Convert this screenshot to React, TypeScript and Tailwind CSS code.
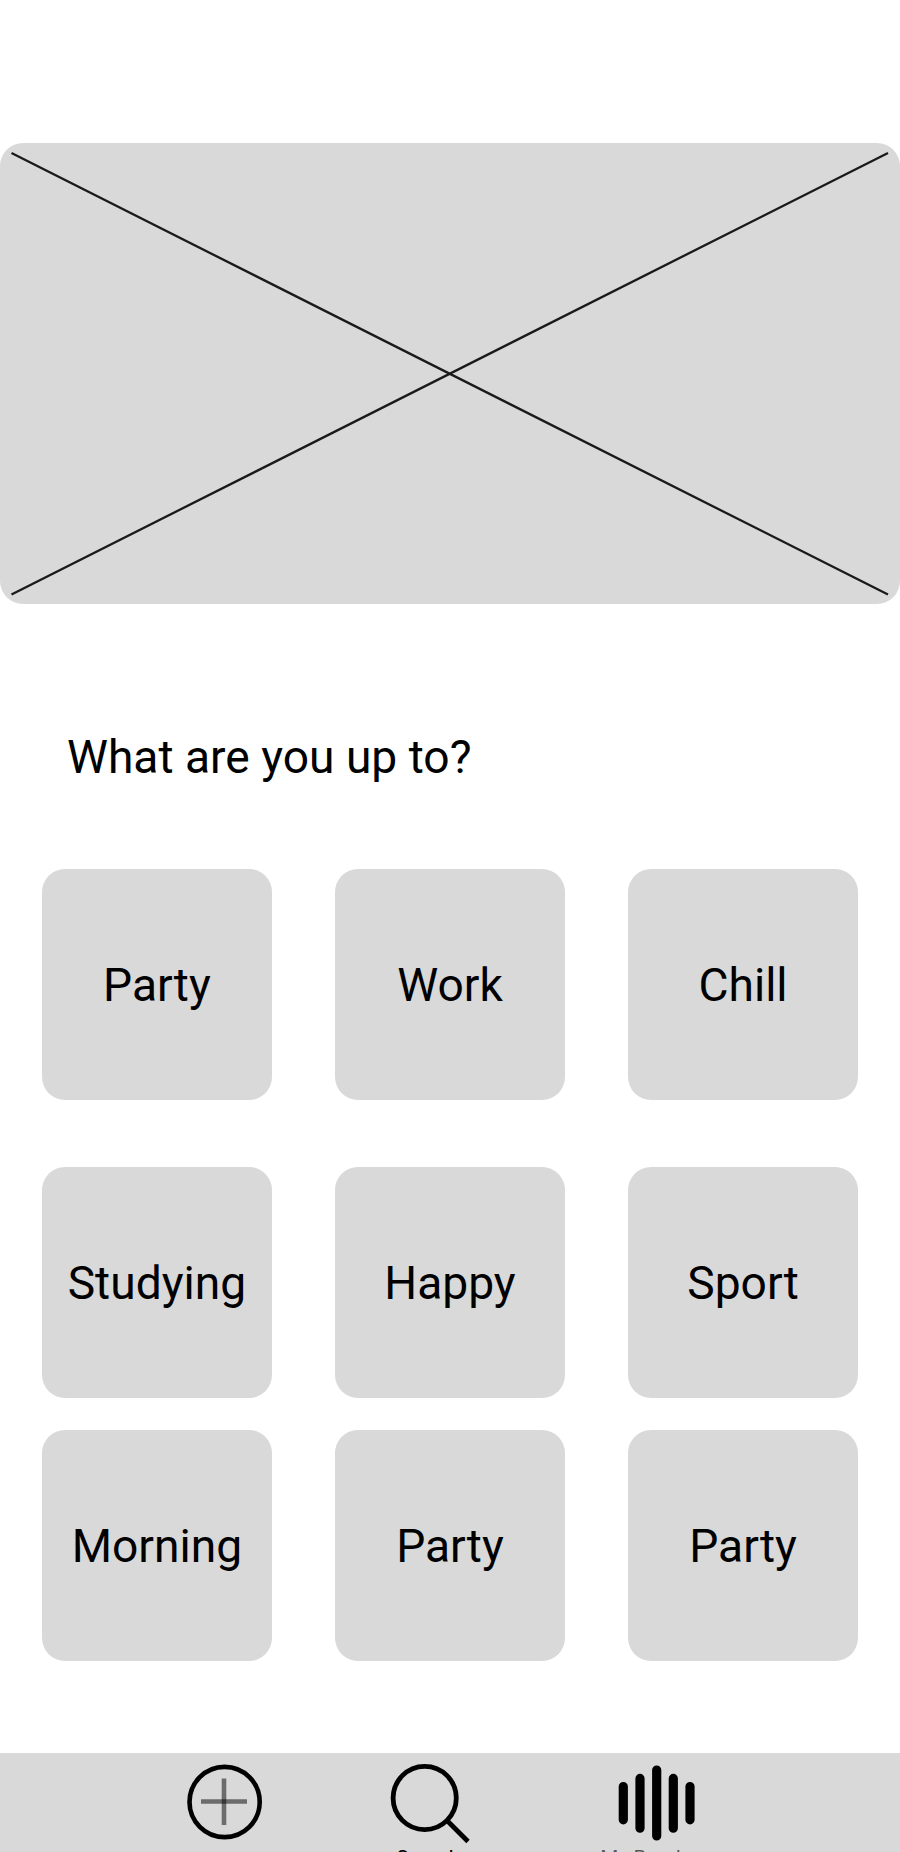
const rows = [
  ["Party", "Work", "Chill"],
  ["Studying", "Happy", "Sport"],
  ["Morning", "Party", "Party"],
];

function Card({ label }: { label: string }) {
  return (
    <button className="flex h-[230.77px] w-[230.77px] items-center justify-center rounded-[23px] bg-[#d9d9d9] text-[46.15px] leading-[54px]">
      {label}
    </button>
  );
}

function Row({ items }: { items: string[] }) {
  return (
    <div className="flex gap-[62.3px]">
      {items.map((label, i) => (
        <Card key={i} label={label} />
      ))}
    </div>
  );
}

export default function App() {
  return (
    <div className="flex h-[1852px] w-[900px] flex-col overflow-hidden bg-white pt-[142.5px] font-['Roboto',sans-serif] text-black">
      <div className="h-[461.5px] w-[899.5px] shrink-0 rounded-[23px] bg-[#d9d9d9]">
        <svg className="block h-full w-full" viewBox="0 0 899.5 461.5" fill="none" stroke="#1a1a1a" strokeWidth="2.3">
          <path d="M11.5 10L888 451.5M888 10L11.5 451.5" />
        </svg>
      </div>
      <h1 className="mt-[126px] shrink-0 pl-[67px] text-[46.15px] leading-[54px] font-normal">What are you up to?</h1>
      <main className="mt-[85.3px] flex shrink-0 flex-col pl-[41.54px]">
        <Row items={rows[0]} />
        <div className="h-[67.4px]" />
        <Row items={rows[1]} />
        <div className="h-[32.2px]" />
        <Row items={rows[2]} />
      </main>
      <nav className="mt-auto flex h-[99px] shrink-0 overflow-hidden bg-[#d9d9d9] pt-[11px]">
        <div className="ml-[186px] w-[77px]">
          <svg width="77" height="78" viewBox="0 0 77 78" fill="none">
            <circle cx="38.6" cy="38" r="35.1" stroke="#000" strokeWidth="4.6" />
            <path d="M15 37.5H61" stroke="#000" strokeOpacity=".5" strokeWidth="4.6" />
            <path d="M38 14.5V61" stroke="#000" strokeOpacity=".5" strokeWidth="4.6" />
          </svg>
        </div>
        <div className="ml-[127px] flex w-[80px] flex-col">
          <svg className="shrink-0" width="80" height="80" viewBox="0 0 80 80" fill="none" stroke="#000" strokeWidth="4.8">
            <circle cx="34.7" cy="34" r="31.6" />
            <path d="M56.5 56L78 77.5" />
          </svg>
          <span className="mt-[2px] shrink-0 pl-[6.4px] text-[20.77px] leading-[24px]">Search</span>
        </div>
        <div className="ml-[127px] flex w-[120px] flex-col">
          <svg className="ml-[20px] shrink-0" width="80" height="80" viewBox="0 0 80 80" stroke="#000" strokeWidth="9.2" strokeLinecap="round">
            <path d="M6.3 22.5V55.8M23 14.4V64.2M39.7 6V72M56.3 14.4V64.2M73 22.5V55.8" />
          </svg>
          <span className="mt-[2px] shrink-0 pl-[3.3px] text-[20.77px] leading-[24px] text-black/60">My Band</span>
        </div>
      </nav>
    </div>
  );
}
